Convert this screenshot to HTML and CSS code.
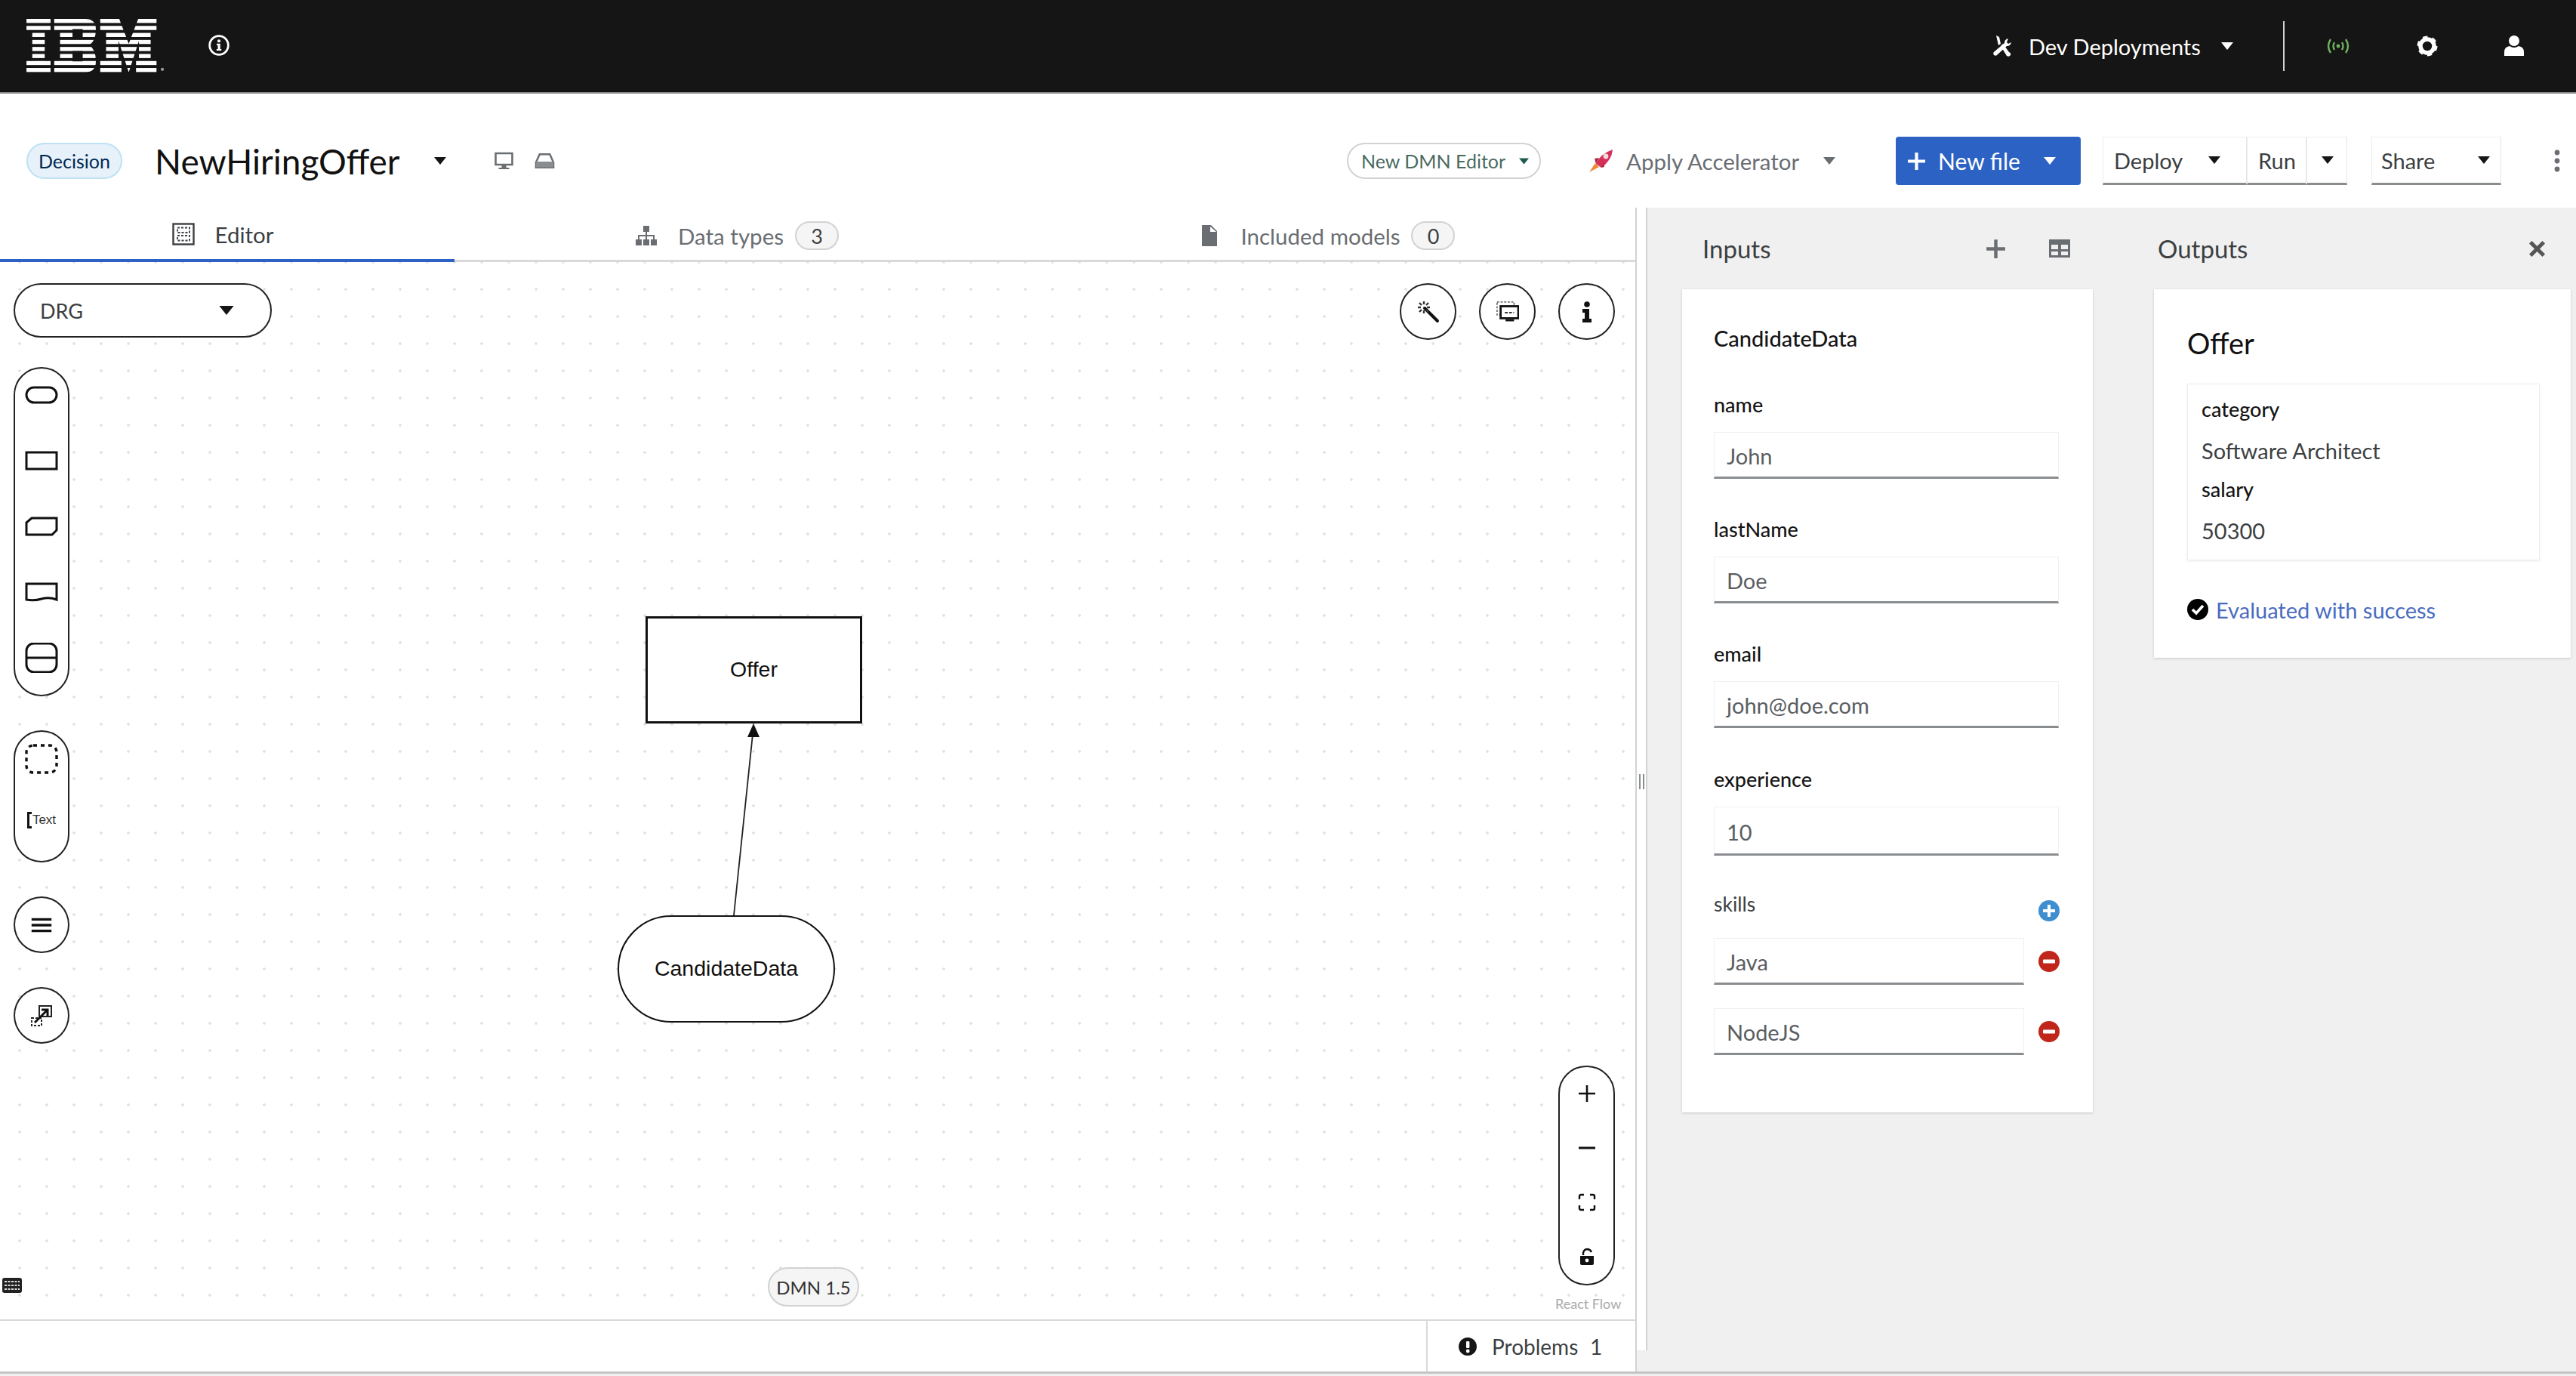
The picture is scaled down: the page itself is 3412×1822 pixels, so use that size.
FILE: index.html
```html
<!DOCTYPE html>
<html lang="en">
<head>
<meta charset="utf-8">
<title>NewHiringOffer</title>
<link rel="stylesheet" href="styles.css">
</head>
<body>
<div class="page">
  <header class="masthead">
    <svg class="ibm" viewBox="0 0 188 74.4">
      <defs>
        <mask id="stripes">
          <rect x="0" y="0" width="182" height="5.6" fill="#fff"/><rect x="0" y="9.6" width="182" height="5.6" fill="#fff"/><rect x="0" y="19.2" width="182" height="5.6" fill="#fff"/><rect x="0" y="28.8" width="182" height="5.6" fill="#fff"/><rect x="0" y="38.4" width="182" height="5.6" fill="#fff"/><rect x="0" y="48" width="182" height="5.6" fill="#fff"/><rect x="0" y="57.6" width="182" height="5.6" fill="#fff"/><rect x="0" y="67.2" width="182" height="5.6" fill="#fff"/>
        </mask>
      </defs>
      <g mask="url(#stripes)" fill="#fff">
        <path d="M0 0H33V16H25V57H33V73H0V57H8V16H0Z"/>
        <path fill-rule="evenodd" d="M38 0H80Q95 0 95 14Q95 30 86 36Q95 42 95 58Q95 73 80 73H38V57H46V16H38ZM63 14V28H77V14ZM63 44V58H77V44Z"/>
        <path d="M101 0H127L140 34L153 0H178V16H170V57H178V73H150V57H154V30L140 73L126 30V57H130V73H101V57H109V16H101Z"/>
      </g>
      <circle cx="186" cy="69" r="2.2" fill="#999"/>
    </svg>
    <svg class="head-info" viewBox="0 0 28 28"><circle cx="14" cy="14" r="11.5" fill="none" stroke="#fff" stroke-width="2.6"/><circle cx="14" cy="8.6" r="1.9" fill="#fff"/><path d="M11.2 12H15.6V18.6H17V20.6H11V18.6H12.6V14H11.2Z" fill="#fff"/></svg>
    <div class="head-right">
      <svg class="tools-icon" viewBox="0 0 30 30"><path d="M8 1L12 3L14 12L11 14ZM14 15L22 28Q25 30 27 27Q28 24 25 23L17 12Z" fill="#fff"/><path d="M24 5Q19 6 19 11L6 22Q3 24 5 27Q8 29 10 26L22 15Q27 15 28 10L24 12L22 10Z" fill="#fff"/></svg>
      <span class="dev-label">Dev Deployments</span>
      <svg class="caret-white" viewBox="0 0 16 10"><path d="M0 0H16L8 10Z"/></svg>
      <span class="head-divider"></span>
      <svg class="wave" viewBox="0 0 32 22"><g fill="none" stroke="#6fb35f" stroke-width="2.4"><path d="M6 2Q0 11 6 20"/><path d="M26 2Q32 11 26 20"/><path d="M11 6Q8 11 11 16"/><path d="M21 6Q24 11 21 16"/></g><circle cx="16" cy="11" r="2.4" fill="#6fb35f"/></svg>
      <svg class="gear" viewBox="0 0 28 28"><circle cx="14" cy="14" r="9" fill="none" stroke="#fff" stroke-width="5.5"/><circle cx="14" cy="14" r="11.5" fill="none" stroke="#fff" stroke-width="4" stroke-dasharray="6 6.04"/></svg>
      <svg class="user" viewBox="0 0 28 30"><circle cx="14" cy="8" r="7" fill="#fff"/><path d="M1 28V23Q1 16 8 15Q14 19 20 15Q27 16 27 23V28Z" fill="#fff"/></svg>
    </div>
  </header>

  <div class="toolbar">
    <span class="kind-badge">Decision</span>
    <h1 class="file-name">NewHiringOffer</h1>
    <svg class="caret-dark caret-title" viewBox="0 0 16 10"><path d="M0 0H16L8 10Z"/></svg>
    <svg class="mini-icon monitor" viewBox="0 0 26 24"><path d="M2 2H24V17H2Z" fill="none" stroke="#6a6e73" stroke-width="2.6"/><path d="M10 18H16V21H20V23H6V21H10Z" fill="#6a6e73"/></svg>
    <svg class="mini-icon" viewBox="0 0 28 24"><path d="M2 14L7 3H21L26 14V21H2Z" fill="none" stroke="#6a6e73" stroke-width="2.6"/><path d="M2 13H26V21H2Z" fill="#8a8d90"/></svg>
    <div class="tool-right">
      <div class="editor-pill"><span>New DMN Editor</span><svg class="caret-green" viewBox="0 0 16 10"><path d="M0 0H16L8 10Z"/></svg></div>
      <div class="accel">
        <svg class="rocket" viewBox="0 0 36 32"><path d="M11 20Q16 7 33 1Q32 15 18 25Z" fill="#d62f5a"/><circle cx="24" cy="10" r="3.4" fill="#f3d9de"/><path d="M10 19L15 24L2 31Z" fill="#ef8a3a"/><path d="M9 13L15 12L11 20Z" fill="#a9283f"/><path d="M18 25L21 18L22 24Z" fill="#a9283f"/></svg>
        <span>Apply Accelerator</span>
        <svg class="caret-grey" viewBox="0 0 16 10"><path d="M0 0H16L8 10Z"/></svg>
      </div>
      <div class="new-file">
        <svg class="plus-white" viewBox="0 0 24 24"><path d="M10 1H14V10H23V14H14V23H10V14H1V10H10Z" fill="#fff"/></svg>
        <span>New file</span>
        <svg class="caret-white" viewBox="0 0 16 10"><path d="M0 0H16L8 10Z"/></svg>
      </div>
      <div class="action-group">
        <div class="action deploy"><span>Deploy</span><svg class="caret-dark" viewBox="0 0 16 10"><path d="M0 0H16L8 10Z"/></svg></div>
        <div class="action run"><span>Run</span></div>
        <div class="action run-caret"><svg class="caret-dark" viewBox="0 0 16 10"><path d="M0 0H16L8 10Z"/></svg></div>
      </div>
      <div class="action share"><span>Share</span><svg class="caret-dark" viewBox="0 0 16 10"><path d="M0 0H16L8 10Z"/></svg></div>
      <svg class="kebab" viewBox="0 0 10 30"><circle cx="5" cy="4" r="3.4"/><circle cx="5" cy="15" r="3.4"/><circle cx="5" cy="26" r="3.4"/></svg>
    </div>
  </div>

  <main class="workspace">
    <section class="editor">
      <nav class="tabs">
        <div class="tab tab-editor active">
          <svg class="tab-icon" viewBox="0 0 30 30"><rect x="1.5" y="1.5" width="27" height="27" fill="none" stroke="#3c3f42" stroke-width="2.4"/><g fill="none" stroke="#3c3f42" stroke-width="1.8" stroke-dasharray="3 2"><rect x="7" y="6.5" width="16" height="6.5"/><rect x="7" y="17" width="16" height="6.5"/></g></svg>
          <span>Editor</span>
        </div>
        <div class="tab tab-types">
          <svg class="tab-icon" viewBox="0 0 30 30"><g fill="#6a6e73"><rect x="11" y="2" width="8" height="8"/><rect x="1" y="20" width="8" height="8"/><rect x="11" y="20" width="8" height="8"/><rect x="21" y="20" width="8" height="8"/><path d="M14 10H16V14H26V20H24V16H16V20H14V16H6V20H4V14H14Z"/></g></svg>
          <span>Data types</span><span class="count">3</span>
        </div>
        <div class="tab tab-models">
          <svg class="tab-icon" viewBox="0 0 30 30"><path d="M5 1H17L25 9V29H5ZM16 3V10H24Z" fill="#6a6e73" fill-rule="evenodd"/></svg>
          <span>Included models</span><span class="count">0</span>
        </div>
      </nav>

      <div class="canvas">
        <div class="drg-select"><span>DRG</span><svg class="caret-dark" viewBox="0 0 16 10"><path d="M0 0H16L8 10Z"/></svg></div>

        <div class="palette palette-nodes">
          <svg class="pal-icon" viewBox="0 0 44 40"><rect x="2" y="10" width="40" height="20" rx="10"/></svg>
          <svg class="pal-icon" viewBox="0 0 44 40"><rect x="2" y="9" width="40" height="22"/></svg>
          <svg class="pal-icon" viewBox="0 0 44 40"><path d="M9 9H42V25L36 31H2V15Z"/></svg>
          <svg class="pal-icon" viewBox="0 0 44 40"><path d="M2 9H42V30Q32 26 22 29T2 30Z"/></svg>
          <svg class="pal-icon" viewBox="0 0 44 40"><rect x="2" y="1" width="40" height="38" rx="10"/><path d="M2 20H42"/></svg>
        </div>
        <div class="palette palette-extras">
          <svg class="pal-icon" viewBox="0 0 44 40"><rect class="dashed" x="2" y="2" width="40" height="36" rx="9"/></svg>
          <div class="text-icon"><span class="bracket"></span><span>Text</span></div>
        </div>
        <div class="round-btn hamburger-btn">
          <svg class="small-icon" viewBox="0 0 26 20"><path d="M1 3H25M1 10H25M1 17H25" fill="none" stroke="#111" stroke-width="3"/></svg>
        </div>
        <div class="round-btn overlay-btn">
          <svg class="small-icon" viewBox="0 0 30 30"><rect x="12" y="2" width="16" height="14" fill="none" stroke="#222" stroke-width="2"/><rect x="2" y="18" width="13" height="10" fill="none" stroke="#222" stroke-width="2" stroke-dasharray="3 2"/><path d="M6 24L22 8M15 7H23V15" fill="none" stroke="#111" stroke-width="3"/></svg>
        </div>

        <div class="circle-btn wand-btn">
          <svg class="small-icon" viewBox="0 0 30 30"><path d="M10 10L27 27" stroke="#111" stroke-width="4" stroke-linecap="round"/><path d="M9 1V5M9 13V17M1 9H5M13 9H17M3 3L6 6M12 12L15 15M15 3L12 6M3 15L6 12" stroke="#333" stroke-width="2.4"/></svg>
        </div>
        <div class="circle-btn monitor-btn">
          <svg class="small-icon" viewBox="0 0 32 30"><rect x="1" y="1" width="24" height="18" fill="none" stroke="#777" stroke-width="2" stroke-dasharray="3 2"/><rect x="6" y="7" width="25" height="17" fill="#fff" stroke="#111" stroke-width="3"/><path d="M12 16H25" stroke="#333" stroke-width="2" stroke-dasharray="4 2"/><path d="M13 27H25" stroke="#111" stroke-width="2.6"/></svg>
        </div>
        <div class="circle-btn info-btn">
          <svg class="small-icon" viewBox="0 0 30 30"><circle cx="15" cy="5" r="3.8" fill="#111"/><path d="M9 11H18V24H21V29H9V24H12V16H9Z" fill="#111"/></svg>
        </div>

        <svg class="edge" viewBox="0 0 60 280"><path d="M10 275L37 16" stroke="#222" stroke-width="1.8" fill="none"/><path d="M38 2L46 20H30Z" fill="#111"/></svg>
        <div class="node node-decision">Offer</div>
        <div class="node node-input">CandidateData</div>

        <div class="zoom-pill">
          <svg class="zoom-icon" viewBox="0 0 24 24"><path d="M12 1V23M1 12H23" stroke="#111" stroke-width="2.6"/></svg>
          <svg class="zoom-icon" viewBox="0 0 24 24"><path d="M1 12H23" stroke="#111" stroke-width="3"/></svg>
          <svg class="zoom-icon" viewBox="0 0 24 24"><path d="M2 8V4Q2 2 4 2H8M16 2H20Q22 2 22 4V8M22 16V20Q22 22 20 22H16M8 22H4Q2 22 2 20V16" fill="none" stroke="#111" stroke-width="2.4"/></svg>
          <svg class="zoom-icon" viewBox="0 0 24 24"><path d="M3 11H21V21Q21 23 19 23H5Q3 23 3 21Z" fill="#111"/><path d="M7 10V7Q8 2 13 2Q17 3 18 6" fill="none" stroke="#111" stroke-width="2.4"/><circle cx="12" cy="17" r="2.4" fill="#fff"/></svg>
        </div>
        <span class="attribution">React Flow</span>
        <span class="version-pill">DMN 1.5</span>
        <svg class="keyboard" viewBox="0 0 26 20"><rect width="26" height="20" rx="3" fill="#222"/><path d="M3 5H23M3 10H23M3 15H23" stroke="#ddd" stroke-width="2" stroke-dasharray="3 1.5"/></svg>
      </div>

      <div class="problems-bar">
        <div class="problems-tab">
          <svg class="problem-icon" viewBox="0 0 24 24"><circle cx="12" cy="12" r="12" fill="#151515"/><rect x="10" y="5" width="4.4" height="9" rx="1" fill="#fff"/><circle cx="12.2" cy="18" r="2.4" fill="#fff"/></svg>
          <span class="problems-label">Problems</span>
          <span class="problems-count">1</span>
        </div>
      </div>
    </section>

    <div class="splitter"><span class="grip"></span></div>

    <section class="results">
      <div class="column col-inputs">
        <div class="col-head">
          <h2>Inputs</h2>
          <svg class="head-plus" viewBox="0 0 24 24"><path d="M10 1H14V10H23V14H14V23H10V14H1V10H10Z" fill="#6a6e73"/></svg>
          <svg class="head-table" viewBox="0 0 28 24"><path fill-rule="evenodd" d="M0 0H28V24H0ZM3 7V13H12V7ZM16 7V13H25V7ZM3 16V21H12V16ZM16 16V21H25V16Z" fill="#6a6e73"/></svg>
        </div>
        <div class="card input-card">
          <h3 class="card-title">CandidateData</h3>
          <div class="field"><label>name</label><div class="text-input">John</div></div>
          <div class="field"><label>lastName</label><div class="text-input">Doe</div></div>
          <div class="field field-email"><label>email</label><div class="text-input">john@doe.com</div></div>
          <div class="field field-last"><label>experience</label><div class="text-input tall">10</div></div>
          <div class="skills-head">
            <span>skills</span>
            <svg class="round-action" viewBox="0 0 28 28"><circle cx="14" cy="14" r="14" fill="#3e8ed0"/><path d="M12 6H16V12H22V16H16V22H12V16H6V12H12Z" fill="#fff"/></svg>
          </div>
          <div class="skill-row">
            <div class="text-input">Java</div>
            <svg class="round-action" viewBox="0 0 28 28"><circle cx="14" cy="14" r="14" fill="#c0271a"/><rect x="6" y="11.5" width="16" height="5" rx="1" fill="#fff"/></svg>
          </div>
          <div class="skill-row">
            <div class="text-input">NodeJS</div>
            <svg class="round-action" viewBox="0 0 28 28"><circle cx="14" cy="14" r="14" fill="#c0271a"/><rect x="6" y="11.5" width="16" height="5" rx="1" fill="#fff"/></svg>
          </div>
        </div>
      </div>
      <div class="column col-outputs">
        <div class="col-head">
          <h2>Outputs</h2>
          <svg class="head-close" viewBox="0 0 20 20"><path d="M3 3L17 17M17 3L3 17" stroke="#555" stroke-width="4"/></svg>
        </div>
        <div class="card output-card">
          <h3 class="output-title">Offer</h3>
          <div class="output-box">
            <div class="out-key">category</div>
            <div class="out-val">Software Architect</div>
            <div class="out-key">salary</div>
            <div class="out-val">50300</div>
          </div>
          <div class="eval-row">
            <svg class="check-icon" viewBox="0 0 28 28"><circle cx="14" cy="14" r="14" fill="#000"/><path d="M7 14L12 19L21 9" fill="none" stroke="#fff" stroke-width="3.6"/></svg>
            <span>Evaluated with success</span>
          </div>
        </div>
      </div>
    </section>
  </main>
  <div class="page-foot"></div>
</div>
</body>
</html>
```
FILE: styles.css
```css
* { box-sizing: border-box; }
html, body { margin: 0; padding: 0; }
body { font-family: Lato, "Noto Sans", sans-serif; color: #151515; background: #fff; }
h1, h2, h3 { margin: 0; font-weight: 400; }
.page { width: 3412px; height: 1822px; overflow: hidden; display: flex; flex-direction: column; }

/* masthead */
.masthead { flex: none; height: 124px; background: #151515; border-bottom: 2px solid #8a8d90; display: flex; align-items: center; padding-left: 35px; }
.ibm { width: 182px; height: 72px; }
.head-info { width: 30px; height: 30px; margin-left: 58px; margin-top: -2px; }
.head-right { margin-left: auto; display: flex; align-items: center; }
.tools-icon { width: 30px; height: 30px; }
.dev-label { width: 230px; margin-left: 21px; color: #fff; font-size: 29px; white-space: nowrap; }
.caret-white { width: 16px; height: 10px; fill: #fff; }
.head-right .caret-white { margin-left: 25px; }
.head-divider { width: 2px; height: 66px; background: #d2d2d2; margin-left: 66px; }
.wave { width: 32px; height: 22px; margin-left: 55px; }
.gear { width: 28px; height: 28px; margin-left: 88px; }
.user { width: 28px; height: 30px; margin-left: 87px; margin-right: 68px; }

/* toolbar */
.toolbar { flex: none; height: 151px; padding-top: 27px; display: flex; align-items: center; padding-left: 35px; }
.kind-badge { width: 127px; height: 48px; border-radius: 24px; background: #e7f1fa; border: 2px solid #bee1f4; color: #002952; font-size: 25px; display: flex; align-items: center; justify-content: center; }
.file-name { width: 322px; margin-left: 43px; font-size: 46px; color: #111; white-space: nowrap; }
.caret-dark { width: 16px; height: 10px; fill: #151515; }
.caret-title { margin-left: 48px; }
.mini-icon { width: 27px; height: 24px; }
.monitor { margin-left: 63px; }
.mini-icon + .mini-icon { margin-left: 27px; }
.tool-right { margin-left: auto; display: flex; align-items: center; padding-right: 20px; }
.editor-pill { width: 257px; height: 48px; border: 2px solid #d2d2d2; border-radius: 24px; padding-left: 17px; display: flex; align-items: center; color: #4a6b5f; font-size: 25px; white-space: nowrap; }
.caret-green { width: 13px; height: 9px; margin-left: auto; margin-right: 14px; fill: #1e5b4f; }
.accel { width: 336px; margin-left: 62px; display: flex; align-items: center; color: #6a6e73; font-size: 29.5px; white-space: nowrap; }
.rocket { width: 36px; height: 32px; }
.accel span { width: 228px; margin-left: 15px; }
.caret-grey { width: 16px; height: 10px; fill: #6a6e73; margin-left: 33px; }
.new-file { width: 245px; height: 64px; margin-left: 72px; background: #2b62c4; border-radius: 4px; color: #fff; font-size: 30px; display: flex; align-items: center; padding-left: 15px; }
.plus-white { width: 25px; height: 25px; }
.new-file span { width: 103px; margin-left: 16px; white-space: nowrap; }
.new-file .caret-white { margin-left: 37px; }
.action-group { display: flex; margin-left: 29px; }
.action { height: 64px; display: flex; align-items: center; font-size: 29px; color: #3c3f42; background: #fff; border-top: 1px solid #eee; border-right: 1px solid #e4e4e4; border-left: 1px solid #eee; border-bottom: 3px solid #8a8d90; }
.deploy { width: 191px; padding-left: 14px; }
.deploy .caret-dark { margin-left: auto; margin-right: 34px; }
.run { width: 79px; padding-left: 14px; }
.run-caret { width: 54px; padding-left: 19px; }
.share { width: 172px; margin-left: 32px; padding-left: 12px; }
.share .caret-dark { margin-left: auto; margin-right: 14px; }
.kebab { width: 10px; height: 30px; margin-left: 69px; fill: #6a6e73; }

/* workspace */
.workspace { flex: none; height: 1541px; display: flex; background: #f0f0f0; align-items: flex-start; }
.editor { width: 2168px; height: 1541px; background: #fff; border-right: 2px solid #d2d2d2; display: flex; flex-direction: column; }
.tabs { flex: none; height: 72px; display: flex; border-bottom: 3px solid #d9d9d9; }
.tab { height: 72px; display: flex; align-items: center; justify-content: center; font-size: 29.5px; color: #6a6e73; padding-top: 2px; }
.tab-editor { width: 602px; color: #3c3f42; border-bottom: 4px solid #2b62c4; padding-right: 12px; }
.tab-types { width: 748px; }
.tab-models { width: 814px; }
.tab-icon { width: 30px; height: 30px; margin-right: 27px; }
.count { width: 58px; height: 38px; margin-left: 15px; border-radius: 19px; background: #f5f5f5; border: 2px solid #d2d2d2; color: #3c3f42; display: flex; align-items: center; justify-content: center; font-size: 27px; }

/* canvas */
.canvas { flex: 1; position: relative; background-image: radial-gradient(circle, #e2e2e2 1.5px, transparent 2.1px); background-size: 36px 36px; background-position: 8px -18px; }
.drg-select { position: absolute; left: 18px; top: 28px; width: 342px; height: 72px; background: #fff; border: 2px solid #222; border-radius: 36px; display: flex; align-items: center; padding-left: 33px; font-size: 27px; color: #3c3f42; }
.drg-select .caret-dark { width: 20px; height: 12px; margin-left: auto; margin-right: 48px; }
.palette { position: absolute; left: 18px; width: 74px; background: #fff; border: 2px solid #222; border-radius: 37px; display: flex; flex-direction: column; align-items: center; }
.palette-nodes { top: 139px; height: 436px; padding-top: 15px; gap: 47px; }
.palette-extras { top: 620px; height: 175px; padding-top: 16px; gap: 49px; }
.pal-icon { width: 44px; height: 40px; fill: none; stroke: #111; stroke-width: 3; }
.pal-icon .dashed { stroke-dasharray: 5 5; stroke-width: 3.4; }
.text-icon { display: flex; align-items: center; font-family: "Liberation Sans", sans-serif; font-size: 17px; color: #333; height: 24px; }
.bracket { width: 6px; height: 22px; border: 3px solid #111; border-right: none; margin-right: 1px; }
.round-btn { position: absolute; left: 18px; width: 74px; height: 75px; background: #fff; border: 2px solid #222; border-radius: 50%; display: flex; align-items: center; justify-content: center; }
.hamburger-btn { top: 840px; }
.overlay-btn { top: 960px; }
.small-icon { width: 30px; height: 30px; }
.hamburger-btn .small-icon { height: 22px; }
.circle-btn { position: absolute; top: 28px; width: 75px; height: 75px; background: #fff; border: 2px solid #222; border-radius: 50%; display: flex; align-items: center; justify-content: center; }
.wand-btn { left: 1854px; }
.monitor-btn { left: 1959px; }
.info-btn { left: 2064px; }
.node { position: absolute; background: #fff; font-family: "Liberation Sans", sans-serif; font-size: 28.5px; display: flex; align-items: center; justify-content: center; color: #111; border: 3px solid #111; padding-bottom: 2px; }
.node-decision { left: 855px; top: 469px; width: 287px; height: 142px; }
.node-input { left: 818px; top: 865px; width: 288px; height: 142px; border-radius: 71px; border-width: 2px; }
.edge { position: absolute; left: 960px; top: 609px; width: 60px; height: 280px; }
.zoom-pill { position: absolute; left: 2064px; top: 1064px; width: 75px; height: 291px; background: #fff; border: 2px solid #222; border-radius: 37px; display: flex; flex-direction: column; align-items: center; padding-top: 23px; gap: 48px; }
.zoom-icon { width: 24px; height: 24px; }
.attribution { position: absolute; left: 2060px; top: 1368px; font-size: 18px; line-height: 22px; color: #a9a9a9; white-space: nowrap; }
.version-pill { position: absolute; left: 1017px; top: 1331px; width: 121px; height: 52px; border-radius: 26px; background: #f5f5f5; border: 2px solid #d2d2d2; color: #333; font-size: 24px; display: flex; align-items: center; justify-content: center; white-space: nowrap; }
.keyboard { position: absolute; left: 3px; top: 1345px; width: 26px; height: 20px; }

/* problems */
.problems-bar { flex: none; height: 69px; border-top: 2px solid #d9d9d9; display: flex; justify-content: flex-end; }
.problems-tab { width: 277px; height: 67px; border-left: 2px solid #d9d9d9; padding: 3px 2px 3px 3px; display: flex; align-items: center; font-size: 28px; color: #3c3f42; }
.problem-icon { width: 24px; height: 24px; margin-left: 38px; }
.problems-label { width: 106px; margin-left: 20px; white-space: nowrap; }
.problems-count { margin-left: 24px; }

/* splitter */
.splitter { flex: none; width: 14px; height: 1513px; background: #fff; border-right: 2px solid #d2d2d2; display: flex; align-items: center; justify-content: center; padding-top: 0; }
.grip { width: 7px; height: 20px; margin-top: 6px; border-left: 2px solid #8a8d90; border-right: 2px solid #8a8d90; }

/* results */
.results { flex: 1; display: flex; padding-left: 46px; gap: 81px; }
.column { flex: none; }
.col-inputs { width: 544px; }
.col-outputs { width: 552px; }
.col-head { height: 108px; display: flex; align-items: center; }
.col-head h2 { font-size: 33px; color: #3c3f42; }
.col-inputs h2 { margin-left: 27px; }
.col-outputs h2 { margin-left: 5px; }
.head-plus { width: 27px; height: 27px; margin-left: auto; }
.head-table { width: 28px; height: 24px; margin-left: 57px; margin-right: 30px; }
.head-close { width: 25px; height: 25px; margin-left: auto; margin-right: 32px; }
.card { background: #fff; box-shadow: 0 1px 3px rgba(0,0,0,.18); }
.input-card { padding: 47px 45px 76px 42px; }
.card-title { height: 36px; line-height: 36px; font-size: 29px; font-weight: 500; margin-bottom: 53px; }
.field { margin-bottom: 50px; }
.field label { display: block; height: 36px; line-height: 34px; font-size: 27px; font-weight: 500; margin-bottom: 17px; }
.field-email { margin-bottom: 51px; }
.field-last { margin-bottom: 46px; }
.text-input { height: 62px; background: #fff; border: 1px solid #f0f0f0; border-bottom: 3px solid #8a8d90; padding: 3px 0 0 16px; display: flex; align-items: center; font-size: 29px; color: #5a5e63; white-space: nowrap; }
.tall { height: 65px; }
.skills-head { height: 63px; display: flex; justify-content: space-between; align-items: flex-start; font-size: 26.5px; line-height: 36px; color: #3c3f42; }
.skills-head .round-action { margin-top: 13px; margin-right: -1px; }
.round-action { width: 28px; height: 28px; flex: none; }
.skill-row { display: flex; align-items: center; gap: 19px; margin-right: -1px; }
.skill-row .text-input { flex: 1; }
.skill-row + .skill-row { margin-top: 31px; }
.output-card { padding: 50px 41px 46px 44px; }
.output-title { height: 42px; line-height: 42px; font-size: 38px; color: #111; margin-bottom: 33px; }
.output-box { width: 467px; height: 234px; border: 1px solid #eee; box-shadow: 0 1px 3px rgba(0,0,0,.08); padding: 6px 0 0 18px; }
.out-key, .out-val { height: 53px; line-height: 53px; font-size: 27px; white-space: nowrap; font-weight: 500; }
.out-val { color: #3c3f42; font-size: 29px; font-weight: 400; padding-top: 2px; }
.eval-row { margin-top: 47px; height: 36px; display: flex; align-items: center; color: #4a6cc0; font-size: 29px; white-space: nowrap; }
.check-icon { width: 28px; height: 28px; margin-right: 10px; }

.page-foot { flex: 1; background: #f0f0f0; border-top: 3px solid #c4c4c4; }
```
